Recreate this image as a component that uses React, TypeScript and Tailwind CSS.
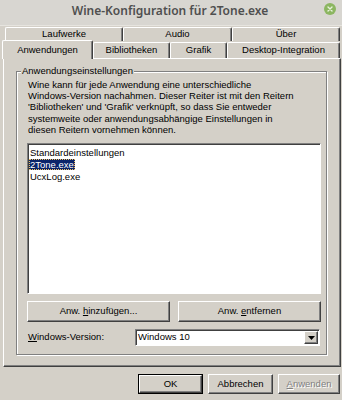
import { useState } from 'react';

// Win-classic 3D borders
const raised = 'border border-t-white border-l-white border-r-[#404040] border-b-[#404040] shadow-[inset_-1px_-1px_0_#808080]';
const sunken = 'border border-t-[#808080] border-l-[#808080] border-r-white border-b-white shadow-[inset_1px_1px_0_#404040]';

const apps = ['Standardeinstellungen', '2Tone.exe', 'UcxLog.exe'];

function BackTab({ label, w }: { label: string; w: string }) {
  return (
    <div className={`${w} h-[14px] flex items-center justify-center border-t border-l border-t-white border-l-white border-r border-r-[#404040] shadow-[inset_-1px_0_0_#808080] rounded-t-[2px]`}>
      {label}
    </div>
  );
}

function FrontTab({ label, w, active }: { label: string; w: string; active?: boolean }) {
  if (active) {
    return (
      <div className={`${w} h-[19px] -mb-px relative z-10 bg-[#d4d0c8] flex items-center justify-center border-t border-l border-t-white border-l-white border-r border-r-[#404040] shadow-[inset_-1px_0_0_#808080] rounded-t-[2px]`}>
        {label}
      </div>
    );
  }
  return (
    <div className={`${w} h-[16px] flex items-center justify-center border-t border-l border-t-white border-l-white border-r border-r-[#404040] shadow-[inset_-1px_0_0_#808080] rounded-t-[2px]`}>
      {label}
    </div>
  );
}

export default function App() {
  const [selected, setSelected] = useState(1);

  return (
    <div
      className="w-[342px] h-[400px] bg-[#d4d0c8] flex flex-col text-[9.5px] text-black overflow-hidden"
      style={{ fontFamily: '"Liberation Sans", Arial, sans-serif' }}
    >
      {/* Titelleiste */}
      <div className="h-[26px] bg-[#d8d6d1] border-b border-b-[#e6e4df] flex items-center">
        <div className="w-[18px]" />
        <div
          className="flex-1 text-center text-[12px] font-semibold text-[#4f4f4f] -mt-[4px] pr-[2px]"
          style={{ fontFamily: '"Noto Sans", "DejaVu Sans", sans-serif' }}
        >
          Wine-Konfiguration für 2Tone.exe
        </div>
        <div className="w-[18px] flex -mt-[8px]">
          <div className="w-[12px] h-[12px] rounded-full bg-[#8cb661] flex items-center justify-center">
            <svg width="6" height="6" viewBox="0 0 6 6">
              <path d="M1 1L5 5M5 1L1 5" stroke="#e8f2dc" strokeWidth="1.4" strokeLinecap="round" />
            </svg>
          </div>
        </div>
      </div>

      {/* Reiter */}
      <div className="pt-[1px] pl-[5px] flex">
        <BackTab label="Laufwerke" w="w-[118px]" />
        <BackTab label="Audio" w="w-[109px]" />
        <BackTab label="Über" w="w-[108px]" />
      </div>
      <div className="pl-[2px] flex items-end h-[17px]">
        <FrontTab label="Anwendungen" w="w-[91px]" active />
        <FrontTab label="Bibliotheken" w="w-[77px]" />
        <FrontTab label="Grafik" w="w-[57px]" />
        <FrontTab label="Desktop-Integration" w="w-[113px]" />
      </div>

      {/* Reiterinhalt */}
      <div className={`ml-[3px] w-[338px] h-[309px] ${raised} border-t-white pt-[12px] pl-[12px]`}>
        <div className="relative w-[311px] h-[284px] border border-[#808080] shadow-[inset_1px_1px_0_white,1px_1px_0_white] pt-[7px] pl-[10px] pr-[5px]">
          <div className="absolute -top-[7px] left-[4px] px-[1px] bg-[#d4d0c8] leading-[12px]">
            Anwendungseinstellungen
          </div>
          <p className="pl-[1px] leading-[11.2px]">
            Wine kann für jede Anwendung eine unterschiedliche
            <br />
            Windows-Version nachahmen. Dieser Reiter ist mit den Reitern
            <br />
            'Bibliotheken' und 'Grafik' verknüpft, so dass Sie entweder
            <br />
            systemweite oder anwendungsabhängige Einstellungen in
            <br />
            diesen Reitern vornehmen können.
          </p>

          {/* Anwendungsliste */}
          <div className={`mt-[8px] h-[151px] bg-white ${sunken} pt-[2px] pl-px`}>
            {apps.map((a, i) => (
              <div key={a} className="h-[12px] flex items-center">
                <span
                  onClick={() => setSelected(i)}
                  className={
                    i === selected
                      ? 'bg-[#0a246a] text-white px-px leading-[11px] outline outline-1 outline-dotted outline-[#f0c060] -outline-offset-1'
                      : 'px-px leading-[11px]'
                  }
                >
                  {a}
                </span>
              </div>
            ))}
          </div>

          <div className="mt-[7px] flex gap-[8px]">
            <button className={`w-[143px] h-[21px] bg-[#d4d0c8] ${raised} flex items-center justify-center`}>
              Anw.&nbsp;<span className="underline">h</span>inzufügen...
            </button>
            <button className={`w-[143px] h-[21px] bg-[#d4d0c8] ${raised} flex items-center justify-center`}>
              Anw.&nbsp;<span className="underline">e</span>ntfernen
            </button>
          </div>

          <div className="mt-[7px] flex items-center">
            <div className="w-[108px] pl-[1px]">
              <span className="underline">W</span>indows-Version:
            </div>
            <div className={`w-[185px] h-[17px] bg-white ${sunken} flex items-center`}>
              <span className="flex-1 pl-[2px]">Windows 10</span>
              <div className={`w-[14px] h-[13px] mr-px bg-[#d4d0c8] ${raised} flex items-center justify-center`}>
                <svg width="7" height="4" viewBox="0 0 7 4">
                  <path d="M0 0H7L3.5 4Z" fill="black" />
                </svg>
              </div>
            </div>
          </div>
        </div>
      </div>

      {/* Dialogknöpfe */}
      <div className="mt-[7px] pr-[2px] flex justify-end gap-[5px]">
        <button className="w-[65px] h-[20px] bg-[#d4d0c8] border border-black flex items-center justify-center">
          <div className={`w-full h-full ${raised} flex items-center justify-center`}>OK</div>
        </button>
        <button className={`w-[65px] h-[20px] bg-[#d4d0c8] ${raised} flex items-center justify-center`}>
          Abbrechen
        </button>
        <button className={`w-[62px] h-[20px] bg-[#d4d0c8] ${raised} flex items-center justify-center text-[#808080] [text-shadow:1px_1px_0_white]`}>
          <span className="underline">A</span>nwenden
        </button>
      </div>
    </div>
  );
}
